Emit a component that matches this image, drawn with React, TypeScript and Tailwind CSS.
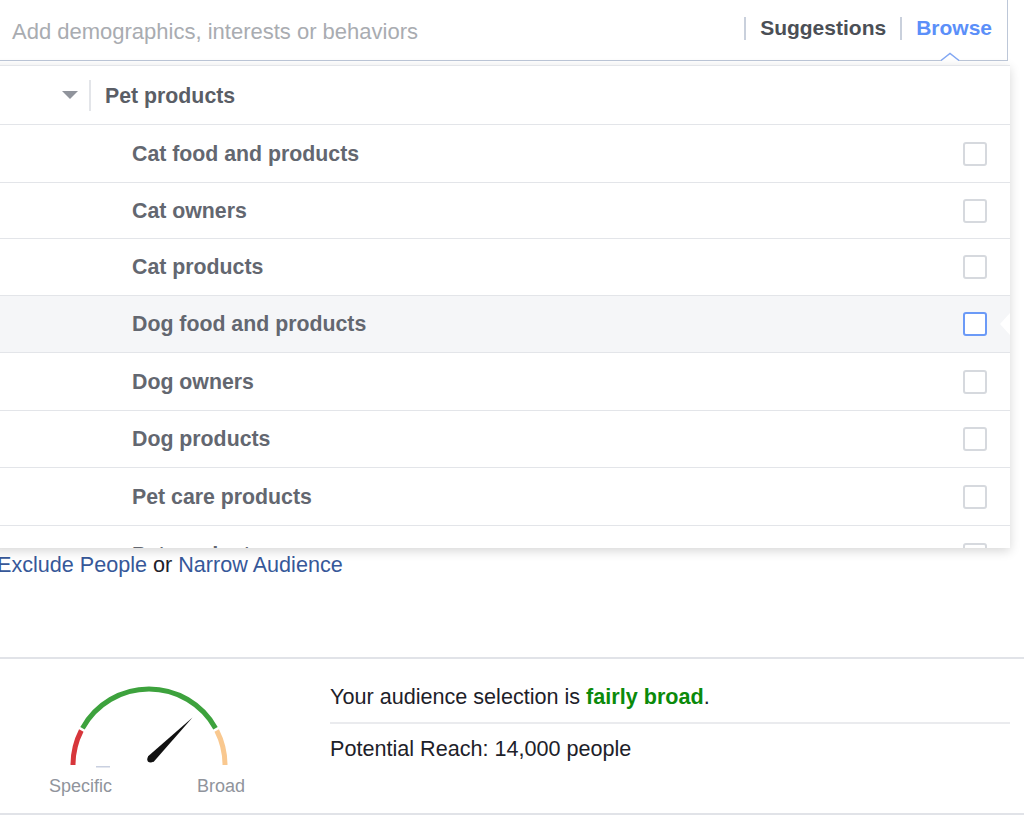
import React from "react";

const rows = [
  { label: "Cat food and products", h: "h-[58px]", active: false },
  { label: "Cat owners", h: "h-[56px]", active: false },
  { label: "Cat products", h: "h-[57px]", active: false },
  { label: "Dog food and products", h: "h-[57px]", active: true },
  { label: "Dog owners", h: "h-[58px]", active: false },
  { label: "Dog products", h: "h-[57px]", active: false },
  { label: "Pet care products", h: "h-[58px]", active: false },
  { label: "Pet products", h: "h-[58px]", active: false },
];

function Gauge() {
  return (
    <svg width="300" height="112" viewBox="0 0 300 112" className="block">
      <path d="M73 106 A76 76 0 0 1 81.3 71.5" fill="none" stroke="#d7363b" strokeWidth="5" />
      <path d="M82.5 69.2 A76 76 0 0 1 215.5 69.2" fill="none" stroke="#3da23d" strokeWidth="5" />
      <path d="M216.7 71.5 A76 76 0 0 1 225 106" fill="none" stroke="#f9c88f" strokeWidth="5" />
      <rect x="96" y="107" width="14" height="1.5" fill="#c9d0e0" />
      <polygon points="147.8,97.5 192.5,58.5 153.5,103" fill="#111" />
      <circle cx="150.6" cy="100.2" r="3.3" fill="#111" />
    </svg>
  );
}

export default function App() {
  return (
    <div className="relative w-[1024px] h-[818px] overflow-hidden bg-white font-['Liberation_Sans',Arial,sans-serif]">
      {/* search input */}
      <div className="relative -ml-[10px] w-[1018px] h-[61px] border-r border-b border-[#bdc7d8] flex items-start">
        <span className="ml-[22px] mt-[19px] text-[22px] leading-[26px] text-[#a9acb1]">
          Add demographics, interests or behaviors
        </span>
        <div className="ml-auto mr-[15px] mt-[16px] flex items-center gap-[14px]">
          <div className="w-[2px] h-[23px] bg-[#c9d0dc]" />
          <span className="text-[21px] leading-[24px] font-bold text-[#4b4f56]">Suggestions</span>
          <div className="w-[2px] h-[23px] bg-[#c9d0dc]" />
          <span className="text-[21px] leading-[24px] font-bold text-[#5b8ff9]">Browse</span>
        </div>
      </div>
      {/* caret notch */}
      <svg className="absolute left-[940px] top-[52px]" width="20" height="10" viewBox="0 0 20 10">
        <polygon points="1,9 10,1.5 19,9" fill="#fff" />
        <polyline points="1,8.5 10,1.5 19,8.5" fill="none" stroke="#82a7f3" strokeWidth="1.5" />
      </svg>

      {/* links line (under dropdown) */}
      <div className="-ml-[3px] mt-[491px] text-[21.6px] leading-[26px] text-[#1d2129]">
        <span className="text-[#365899]">Exclude People</span> or{" "}
        <span className="text-[#365899]">Narrow Audience</span>
      </div>

      {/* audience section */}
      <div className="mt-[79px] h-[158px] border-t-2 border-b-2 border-[#e1e3e8] flex">
        <div className="w-[330px] flex flex-col">
          <Gauge />
          <div className="ml-[49px] mt-[5px] w-[196px] flex justify-between text-[18px] leading-[20px] text-[#90949c]">
            <span>Specific</span>
            <span>Broad</span>
          </div>
        </div>
        <div className="w-[680px] flex flex-col text-[21.6px] leading-[26px] text-[#1d2129]">
          <div className="mt-[25px]">
            Your audience selection is <span className="font-bold text-[#0b8a0b]">fairly broad</span>.
          </div>
          <div className="mt-[12px] h-[2px] bg-[#eaebee]" />
          <div className="mt-[12px]">Potential Reach: 14,000 people</div>
        </div>
      </div>

      {/* dropdown panel */}
      <div className="absolute left-[-10px] top-[65px] w-[1020px] h-[483px] bg-white overflow-hidden border-t border-[#e4e6ea] shadow-[0_3px_10px_rgba(0,0,0,0.16)]">
        <div className="h-[59px] border-b border-[#e3e5e9] flex items-center">
          <svg className="ml-[72px]" width="16" height="8" viewBox="0 0 16 8">
            <polygon points="0,0 16,0 8,8" fill="#90949c" />
          </svg>
          <div className="ml-[11px] w-[2px] h-[31px] bg-[#e3e5e9]" />
          <span className="ml-[14px] mt-[3px] text-[21.3px] font-bold text-[#5a5e66]">Pet products</span>
        </div>
        {rows.map((r) => (
          <div
            key={r.label + r.h}
            className={`relative ${r.h} border-b border-[#e3e5e9] flex items-center ${r.active ? "bg-[#f5f6f8]" : ""}`}
          >
            <span className="ml-[142px] mt-[2px] text-[21.3px] font-bold text-[#636770]">{r.label}</span>
            <div
              className={`ml-auto mr-[23px] w-[24px] h-[24px] rounded-[3px] border-2 bg-white ${
                r.active ? "border-[#6b9af7]" : "border-[#d6d9de]"
              }`}
            />
            {r.active && (
              <svg className="absolute right-0 top-[17px]" width="10" height="22" viewBox="0 0 10 22">
                <polygon points="0,11 10,0 10,22" fill="#fff" />
              </svg>
            )}
          </div>
        ))}
      </div>
    </div>
  );
}
